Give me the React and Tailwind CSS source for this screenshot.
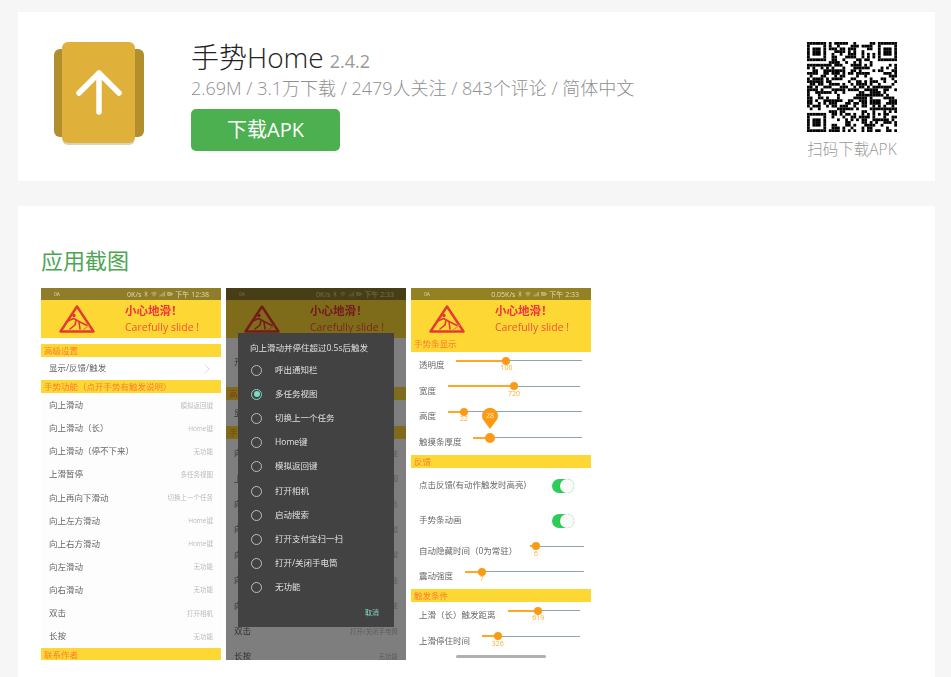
import { Bluetooth, ChevronRight, Signal, Wifi, BatteryFull } from "lucide-react";

const listRows = [
  ["向上滑动", "模拟返回键"],
  ["向上滑动（长）", "Home键"],
  ["向上滑动（停不下来）", "无功能"],
  ["上滑暂停", "多任务视图"],
  ["向上再向下滑动", "切换上一个任务"],
  ["向上左方滑动", "Home键"],
  ["向上右方滑动", "Home键"],
  ["向左滑动", "无功能"],
  ["向右滑动", "无功能"],
  ["双击", "打开相机"],
  ["长按", "无功能"],
];

const dialogOptions = [
  "呼出通知栏",
  "多任务视图",
  "切换上一个任务",
  "Home键",
  "模拟返回键",
  "打开相机",
  "启动搜索",
  "打开支付宝扫一扫",
  "打开/关闭手电筒",
  "无功能",
];

// fake qr matrix, finder and alignment patterns are real and the data part is seeded noise
function qrCells() {
  const size = 33;
  const cells = [];
  let seed = 48271;
  const inBox = (x, y, ox, oy) => x >= ox && x < ox + 8 && y >= oy && y < oy + 8;
  const finder = (x, y) => {
    const d = Math.max(Math.abs(x - 3), Math.abs(y - 3));
    return d === 3 || d <= 1;
  };
  for (let y = 0; y < size; y++) {
    for (let x = 0; x < size; x++) {
      seed = (seed * 48271) % 2147483647;
      let on = seed % 100 < 50;
      const align = Math.max(Math.abs(x - 26), Math.abs(y - 26));
      if (inBox(x, y, 0, 0)) on = x < 7 && y < 7 && finder(x, y);
      else if (inBox(x, y, 25, 0)) on = x > 25 && y < 7 && finder(x - 26, y);
      else if (inBox(x, y, 0, 25)) on = x < 7 && y > 25 && finder(x, y - 26);
      else if (align <= 2) on = align !== 1;
      if (on) cells.push([x, y]);
    }
  }
  return cells;
}

function QrCode() {
  return (
    <svg viewBox="0 0 33 33" className="w-[90px] h-[90px]">
      {qrCells().map(([x, y]) => (
        <rect key={`${x}-${y}`} x={x} y={y} width="1.02" height="1.02" fill="#000" />
      ))}
    </svg>
  );
}

function AppLogo() {
  return (
    <svg viewBox="0 0 90 104" className="w-[90px] h-[104px] shrink-0">
      <rect x="0" y="8" width="90" height="88" rx="6" fill="#b38e2c" />
      <rect x="8" y="2" width="73" height="102" rx="6" fill="#d9d2bd" />
      <rect x="8" y="1" width="73" height="101" rx="6" fill="#e0b13a" />
      <path d="M45 71V32M25 52L45 32L65 52" fill="none" stroke="#fff" strokeWidth="5.5" strokeLinecap="round" strokeLinejoin="round" />
    </svg>
  );
}

function WarningSign() {
  return (
    <svg viewBox="0 0 36 30" className="w-[36px] h-[30px] shrink-0">
      <path d="M18 2.5L34.5 27.5H1.5Z" fill="none" stroke="#e53935" strokeWidth="2.4" strokeLinejoin="round" />
      <circle cx="15" cy="11.5" r="1.7" fill="#e53935" />
      <path d="M9 17L14.5 14.5L21 18L28 21.5M17 16L16 21L11 25M20 18L21 25" fill="none" stroke="#e53935" strokeWidth="1.6" strokeLinecap="round" strokeLinejoin="round" />
      <path d="M24 26L30 21.5" fill="none" stroke="#f08a3c" strokeWidth="1.2" strokeLinecap="round" />
    </svg>
  );
}

function StatusBar({ speed, time, bar }) {
  return (
    <div className={`h-[12px] flex items-center justify-between pl-[13px] pr-[12px] text-[7px] leading-none text-[#e4dcb0] ${bar}`}>
      <span className="text-[5px]">0A</span>
      <span className="flex items-center gap-[2px]">
        {speed}
        <Bluetooth size={6} />
        <Wifi size={6} />
        <Signal size={6} />
        <BatteryFull size={6} />
        <span>下午 {time}</span>
      </span>
    </div>
  );
}

function BannerTop() {
  return (
    <div className="h-[38px] flex items-center pl-[18px]">
      <WarningSign />
      <div className="ml-[30px] text-[#ef3340] leading-[16px]">
        <div className="text-[11.5px] font-bold">小心地滑！</div>
        <div className="text-[10.5px] text-[#f4503c]">Carefully slide !</div>
      </div>
    </div>
  );
}

function SectionHeader({ children }) {
  return <div className="h-[13px] bg-[#fdd835] pl-[3px] text-[8.5px] leading-[13px] text-[#ff7a30] whitespace-nowrap">{children}</div>;
}

function ListRow({ label, value, rowClass }) {
  return (
    <div className={`flex items-center justify-between pl-[8px] pr-[8px] ${rowClass}`}>
      <span className="text-[8.5px] text-[#666]">{label}</span>
      <span className="text-[6.5px] text-[#bbb]">{value}</span>
    </div>
  );
}

function SettingsPhone() {
  return (
    <div className="w-[180px] h-[372px] overflow-hidden bg-[#fdfdfd] blur-[0.35px] shrink-0">
      <StatusBar speed="0K/s" time="12:38" bar="bg-[#8f7d2a]" />
      <div className="bg-[#fdd835]">
        <BannerTop />
      </div>
      <div className="h-[6px] bg-white" />
      <SectionHeader>高级设置</SectionHeader>
      <div className="h-[23px] flex items-center justify-between pl-[8px] pr-[6px] bg-white">
        <span className="text-[8.5px] text-[#666]">显示/反馈/触发</span>
        <ChevronRight size={16} strokeWidth={1} className="text-[#c8c8c8]" />
      </div>
      <SectionHeader>手势功能（点开手势有触发说明）</SectionHeader>
      <div className="pt-[1px]">
        {listRows.map(([label, value]) => (
          <ListRow key={label} label={label} value={value} rowClass="h-[23.1px]" />
        ))}
      </div>
      <SectionHeader>联系作者</SectionHeader>
    </div>
  );
}

function DialogPhone() {
  const rows = listRows.slice(2).map(([label, value]) => (label === "双击" ? [label, "打开/关闭手电筒"] : [label, value]));
  return (
    <div className="relative w-[180px] h-[372px] overflow-hidden bg-[#fdfdfd] shrink-0">
      <div className="blur-[0.4px]">
        <StatusBar speed="0K/s" time="2:33" bar="bg-[#8f7d2a]" />
        <div className="bg-[#fdd835]">
          <BannerTop />
        </div>
        <div className="h-[49px] flex items-center pl-[8px] text-[8.5px] text-[#666]">开启手势</div>
        <SectionHeader>高级设置</SectionHeader>
        <div className="h-[26px] flex items-center pl-[8px] text-[8.5px] text-[#666]">显示/反馈/触发</div>
        <SectionHeader>手势功能（点开手势有触发说明）</SectionHeader>
        <div className="pt-[2px]">
          {rows.map(([label, value]) => (
            <ListRow key={label} label={label} value={value} rowClass="h-[25.4px]" />
          ))}
        </div>
      </div>
      <div className="absolute inset-0 bg-black/50" />
      <div className="absolute top-[45px] left-[12px] w-[156px] h-[294px] bg-[#424242] pt-[10px] pl-[12px] pr-[12px] blur-[0.3px]">
        <div className="text-[8.5px] leading-[10px] text-[#e0e0e0] whitespace-nowrap">向上滑动并停住超过0.5s后触发</div>
        <div className="mt-[5px]">
          {dialogOptions.map((option, i) => (
            <div key={option} className="h-[24.2px] flex items-center">
              {i === 1 ? (
                <span className="ml-[1px] w-[11px] h-[11px] rounded-full border border-[#7fd8c4] flex items-center justify-center">
                  <span className="w-[6px] h-[6px] rounded-full bg-[#7fd8c4]" />
                </span>
              ) : (
                <span className="ml-[1px] w-[11px] h-[11px] rounded-full border border-[#bdbdbd]" />
              )}
              <span className="ml-[13px] text-[8.5px] text-[#e0e0e0]">{option}</span>
            </div>
          ))}
        </div>
        <div className="mt-[8px] pr-[3px] text-right text-[7px] leading-[10px] text-[#7fd8c4]">取消</div>
      </div>
    </div>
  );
}

function SliderRow({ label, value, percent, sliderClass, thumbClass, pin }) {
  return (
    <div className="h-[25.7px] flex items-start justify-between pl-[8px]">
      <span className="mt-[7px] text-[8.5px] leading-[12px] text-[#666] whitespace-nowrap">{label}</span>
      <div className={`relative mt-[8px] h-[1px] bg-[#90a4ae] ${sliderClass}`}>
        <div className="absolute left-0 top-[-0.5px] h-[2px] bg-[#ffa726]" style={{ width: `${percent}%` }} />
        <div className={`absolute rounded-full bg-[#fb9a14] ${thumbClass ?? "top-[-3.5px] w-[8px] h-[8px] -ml-[4px]"}`} style={{ left: `${percent}%` }} />
        <div className="absolute top-[4px] -translate-x-1/2 text-[7px] leading-[8px] text-[#ffa93a]" style={{ left: `${percent}%` }}>
          {value}
        </div>
        {pin && (
          <div className="absolute left-[34px] top-[-3px] w-[16px] h-[21px]">
            <svg viewBox="0 0 16 21" className="w-[16px] h-[21px]">
              <path d="M8 21L2.4 13.6A8 8 0 1 1 13.6 13.6Z" fill="#fb9a14" />
            </svg>
            <span className="absolute left-0 right-0 top-[4px] text-center text-[7px] leading-[8px] text-[#ffe9c4]">{pin}</span>
          </div>
        )}
      </div>
    </div>
  );
}

function ToggleRow({ label, rowClass }) {
  return (
    <div className={`flex items-center justify-between pl-[8px] pr-[17px] ${rowClass}`}>
      <span className="text-[8.5px] text-[#666]">{label}</span>
      <span className="relative w-[22px] h-[14px] rounded-full bg-[#2ecc5a]">
        <span className="absolute right-0 top-0 w-[14px] h-[14px] rounded-full bg-[#fafafa] shadow-[0_0_2px_rgba(0,0,0,0.1)]" />
      </span>
    </div>
  );
}

function SlidersPhone() {
  return (
    <div className="w-[180px] h-[372px] overflow-hidden bg-white blur-[0.35px] shrink-0">
      <StatusBar speed="0.05K/s" time="2:33" bar="bg-[#938124]" />
      <div className="h-[52px] bg-[#fdd835]">
        <BannerTop />
        <div className="pl-[3px] text-[8.5px] leading-[12px] text-[#ff7a30]">手势条显示</div>
      </div>
      <SliderRow label="透明度" value="100" percent={40} sliderClass="w-[126px] mr-[9px]" />
      <SliderRow label="宽度" value="720" percent={50} sliderClass="w-[132px] mr-[11px]" />
      <SliderRow label="高度" value="22" percent={12} sliderClass="w-[134px] mr-[9px]" pin="28" />
      <SliderRow label="触摸条厚度" value="" percent={16} sliderClass="w-[109px] mr-[9px]" thumbClass="top-[-4.5px] w-[10px] h-[10px] -ml-[5px]" />
      <SectionHeader>反馈</SectionHeader>
      <ToggleRow label="点击反馈(有动作触发时高亮)" rowClass="h-[36px]" />
      <ToggleRow label="手势条动画" rowClass="h-[34px]" />
      <SliderRow label="自动隐藏时间（0为常驻）" value="6" percent={11} sliderClass="w-[54px] mr-[7px]" />
      <SliderRow label="震动强度" value="7" percent={14} sliderClass="w-[119px] mr-[7px]" />
      <SectionHeader>触发条件</SectionHeader>
      <SliderRow label="上滑（长）触发距离" value="619" percent={42} sliderClass="w-[72px] mr-[11px]" />
      <SliderRow label="上滑停住时间" value="326" percent={16} sliderClass="w-[98px] mr-[11px]" />
      <div className="mt-[1px] mx-auto w-[90px] h-[3px] rounded-full bg-[#b0b0b0]" />
    </div>
  );
}

export default function App() {
  return (
    <div className="h-[677px] overflow-hidden bg-[#f6f6f6] pt-[12px] pl-[18px] pr-[16px] font-['Open_Sans','Noto_Sans_CJK_SC',sans-serif]">
      <div className="h-[169px] bg-white flex items-start pt-[27px] pl-[36px] pr-[38px]">
        <div className="mt-[2px]">
          <AppLogo />
        </div>
        <div className="ml-[47px] flex-1">
          <div className="flex items-baseline h-[36px]">
            <span className="text-[28px] leading-[36px] text-[#222] font-light">手势Home</span>
            <span className="ml-[6px] text-[18px] text-[#999]">2.4.2</span>
          </div>
          <div className="text-[18px] leading-[26px] text-[#8f8f8f] font-light">
            2.69M / 3.1万下载 / 2479人关注 / 843个评论 / 简体中文
          </div>
          <button className="mt-[8px] block w-[149px] h-[42px] rounded-[5px] bg-[#4caf50] text-[20px] text-white">
            下载APK
          </button>
        </div>
        <div className="mt-[3px] flex flex-col items-center">
          <QrCode />
          <div className="mt-[7px] text-[15.5px] leading-[20px] text-[#999] font-light whitespace-nowrap">扫码下载APK</div>
        </div>
      </div>
      <div className="mt-[25px] bg-white pt-[38px] pl-[23px] h-[500px]">
        <h2 className="text-[22px] leading-[32px] text-[#4ea653]">应用截图</h2>
        <div className="mt-[12px] flex gap-[5px]">
          <SettingsPhone />
          <DialogPhone />
          <SlidersPhone />
        </div>
      </div>
    </div>
  );
}
